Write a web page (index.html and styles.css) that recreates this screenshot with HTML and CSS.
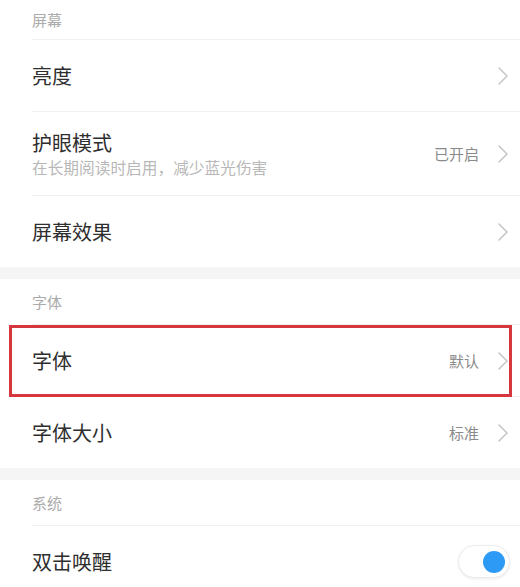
FILE: index.html
```html
<!DOCTYPE html>
<html lang="zh-CN">
<head>
<meta charset="utf-8">
<title>设置</title>
<link rel="stylesheet" href="styles.css">
</head>
<body>
<div class="page">
  <section class="group">
    <div class="header header-first">屏幕</div>
    <div class="row">
      <div class="label"><div class="title">亮度</div></div>
      <div class="trail">
        <svg class="chev" viewBox="0 0 10 18" width="10" height="18"><polyline points="1,1 9,9 1,17"/></svg>
      </div>
    </div>
    <div class="row row-tall">
      <div class="label">
        <div class="title">护眼模式</div>
        <div class="sub">在长期阅读时启用，减少蓝光伤害</div>
      </div>
      <div class="trail">
        <span class="value">已开启</span>
        <svg class="chev" viewBox="0 0 10 18" width="10" height="18"><polyline points="1,1 9,9 1,17"/></svg>
      </div>
    </div>
    <div class="row row-last">
      <div class="label"><div class="title">屏幕效果</div></div>
      <div class="trail">
        <svg class="chev" viewBox="0 0 10 18" width="10" height="18"><polyline points="1,1 9,9 1,17"/></svg>
      </div>
    </div>
  </section>
  <div class="band"></div>
  <section class="group">
    <div class="header">字体</div>
    <div class="row row-marked">
      <div class="label"><div class="title">字体</div></div>
      <div class="trail">
        <span class="value">默认</span>
        <svg class="chev" viewBox="0 0 10 18" width="10" height="18"><polyline points="1,1 9,9 1,17"/></svg>
      </div>
      <div class="mark"></div>
    </div>
    <div class="row row-last">
      <div class="label"><div class="title">字体大小</div></div>
      <div class="trail">
        <span class="value">标准</span>
        <svg class="chev" viewBox="0 0 10 18" width="10" height="18"><polyline points="1,1 9,9 1,17"/></svg>
      </div>
    </div>
  </section>
  <div class="band"></div>
  <section class="group">
    <div class="header">系统</div>
    <div class="row row-last">
      <div class="label"><div class="title">双击唤醒</div></div>
      <div class="trail">
        <span class="toggle"><span class="knob"></span></span>
      </div>
    </div>
  </section>
</div>
</body>
</html>
```
FILE: styles.css
```css
html, body {
  margin: 0;
  padding: 0;
  background: #ffffff;
}
body {
  font-family: "Noto Sans CJK SC", "Noto Sans", sans-serif;
  color: #333333;
  overflow: hidden;
}
.page {
  width: 520px;
}
.group {
  padding-left: 32px;
}
.header {
  height: 45px;
  display: flex;
  align-items: center;
  font-size: 15px;
  color: #ababab;
  border-bottom: 1px solid #f0f0f0;
}
.header-first {
  height: 39px;
}
.row {
  position: relative;
  height: 71px;
  display: flex;
  align-items: center;
  justify-content: space-between;
  border-bottom: 1px solid #f0f0f0;
  padding-right: 12px;
}
.row-tall {
  height: 83px;
}
.row-last {
  border-bottom: none;
}
.label {
  display: flex;
  flex-direction: column;
}
.title {
  font-size: 20px;
  line-height: 26px;
  color: #2e2e2e;
}
.sub {
  font-size: 15.7px;
  line-height: 20px;
  color: #b8b8b8;
  margin-top: 2px;
}
.trail {
  display: flex;
  align-items: center;
  gap: 19px;
}
.value {
  font-size: 15px;
  color: #8a8a8a;
}
.chev {
  display: block;
}
.chev polyline {
  fill: none;
  stroke: #c4c4c4;
  stroke-width: 1.5;
  stroke-linecap: round;
  stroke-linejoin: round;
}
.band {
  height: 12px;
  background: #f5f5f5;
}
.mark {
  position: absolute;
  left: -23px;
  right: 8px;
  top: 0;
  bottom: -1px;
  border: 3px solid #d6373f;
  pointer-events: none;
}
.toggle {
  position: relative;
  display: block;
  width: 52px;
  height: 33px;
  margin-right: -2px;
  border-radius: 17px;
  background: #ffffff;
  border: 1px solid #ececec;
  box-shadow: 0 1px 3px rgba(0, 0, 0, 0.08);
  box-sizing: border-box;
}
.knob {
  position: absolute;
  right: 4px;
  top: 4.5px;
  width: 22px;
  height: 22px;
  border-radius: 50%;
  background: #2d9bf5;
}
```
